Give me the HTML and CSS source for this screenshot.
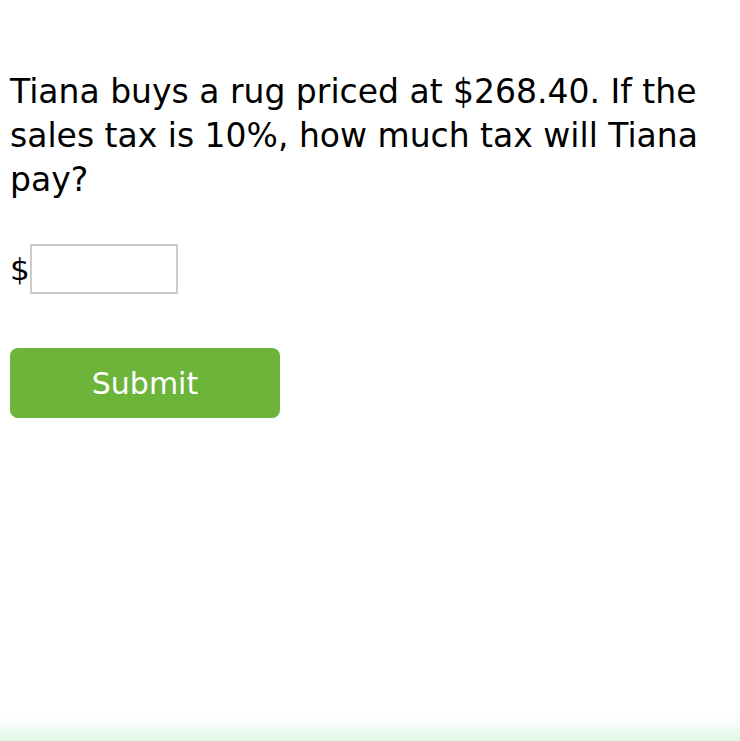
FILE: index.html
```html
<!DOCTYPE html>
<html>
<head>
<meta charset="utf-8">
<link rel="stylesheet" href="styles.css">
</head>
<body>
<main class="page">
  <p class="question">Tiana buys a rug priced at $268.40. If the sales tax is 10%, how much tax will Tiana pay?</p>
  <div class="answer">
    <span class="currency">$</span>
    <input class="field" type="text" aria-label="answer">
  </div>
  <button class="submit" type="button">Submit</button>
</main>
<div class="footer-glow"></div>
</body>
</html>
```
FILE: styles.css
```css
html, body {
  margin: 0;
  padding: 0;
  background: #ffffff;
}
body {
  width: 740px;
  height: 741px;
  overflow: hidden;
  position: relative;
  font-family: "DejaVu Sans", Verdana, sans-serif;
  color: #000;
}
.page {
  padding: 70px 10px 0 10px;
}
.question {
  margin: 0;
  font-size: 33px;
  line-height: 44px;
  width: 715px;
}
.answer {
  display: flex;
  align-items: center;
  margin-top: 42px;
  height: 50px;
}
.currency {
  font-size: 31px;
  line-height: 50px;
  width: 20px;
}
.field {
  box-sizing: border-box;
  width: 148px;
  height: 50px;
  border: 2px solid #cccccc;
  margin: 0;
  padding: 0;
  background: #fff;
  outline: none;
}
.submit {
  display: block;
  margin-top: 54px;
  width: 270px;
  height: 70px;
  border: 0;
  border-radius: 8px;
  background: #6cb43a;
  color: #ffffff;
  font-family: "DejaVu Sans", Verdana, sans-serif;
  font-size: 30px;
  padding: 0;
}
.footer-glow {
  position: absolute;
  left: 0;
  right: 0;
  bottom: 0;
  height: 24px;
  background: linear-gradient(to bottom, rgba(255,255,255,0), #e0f7e8);
}
```
